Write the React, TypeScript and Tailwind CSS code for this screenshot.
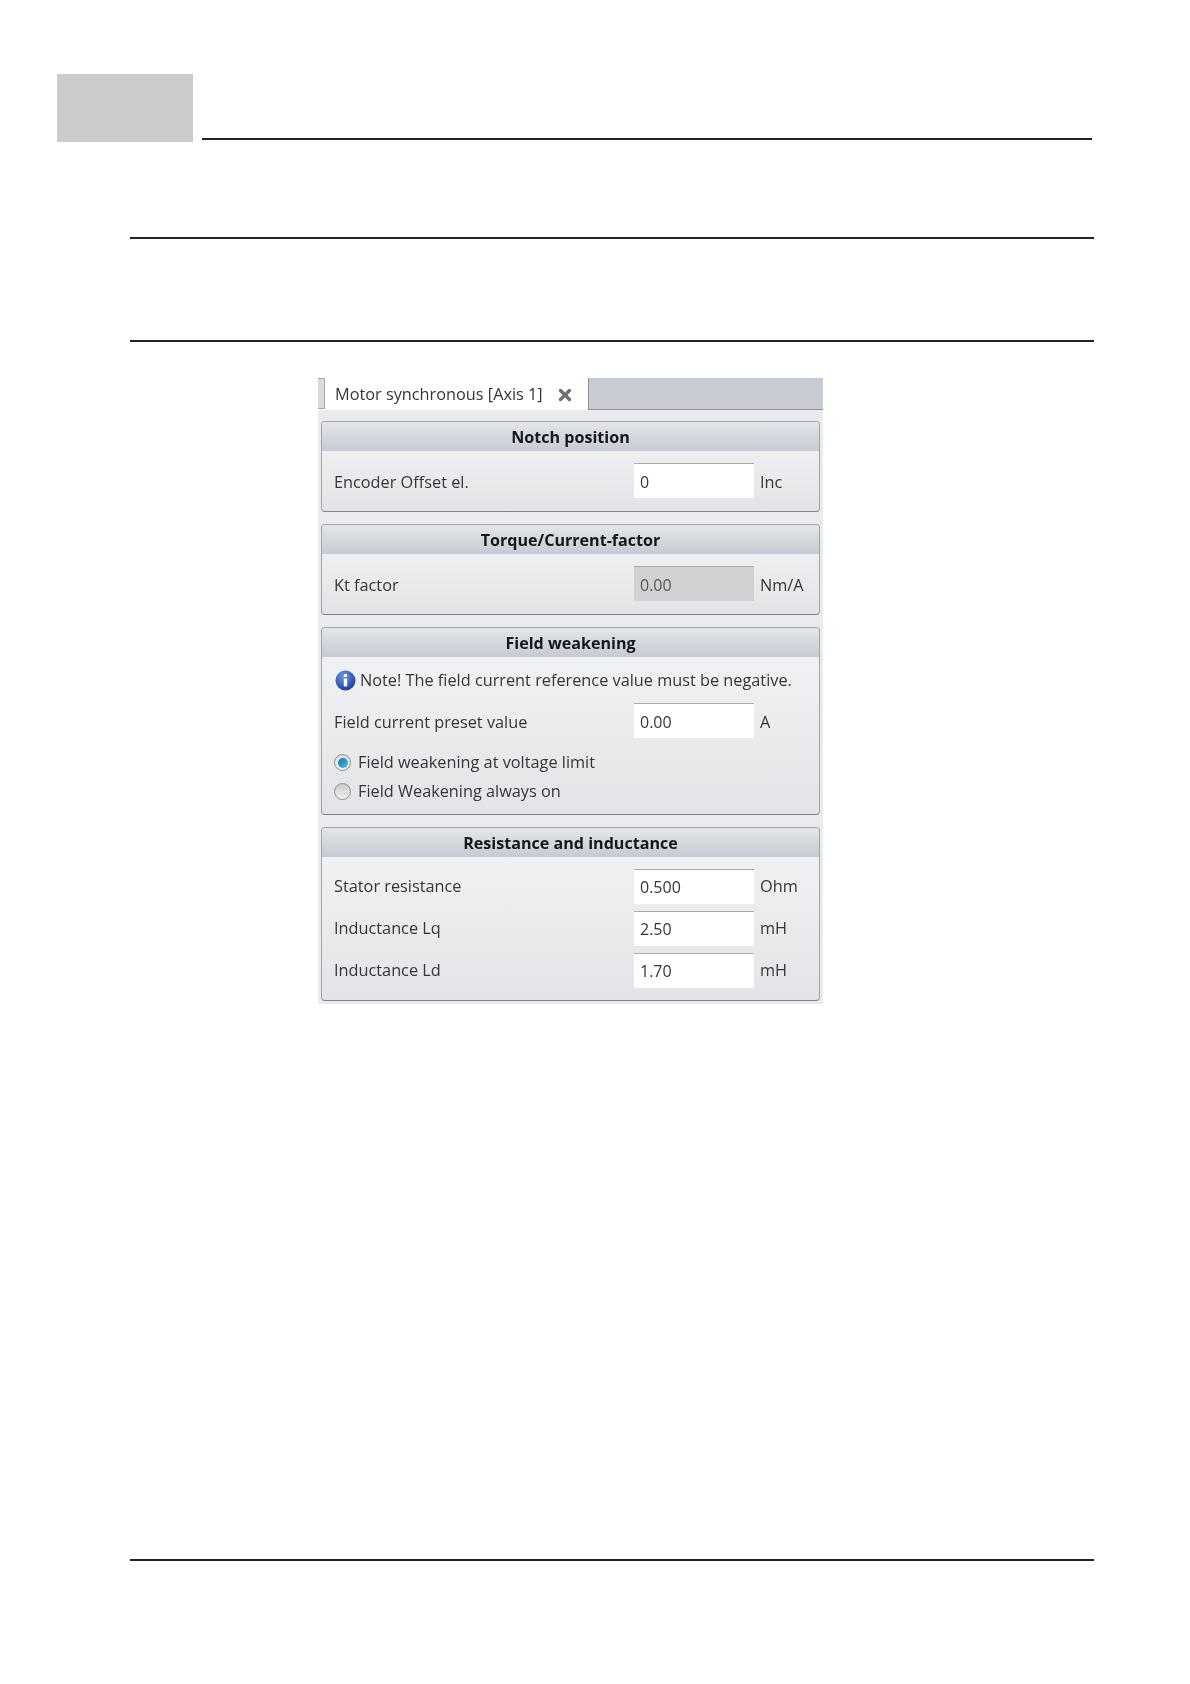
import React from 'react';
import { X } from 'lucide-react';

const font = "font-['Open_Sans','Noto_Sans',sans-serif]";

const GroupBox: React.FC<{ title: string; children: React.ReactNode; className: string }> = ({ title, children, className }) => (
  <div className={`rounded-[4px] border border-[#a0a3a7] border-b-[#7f8286] bg-gradient-to-b from-[#f3f4f5] to-[#e2e4e7] overflow-hidden ${className}`}>
    <div className="h-[29px] pt-[2px] flex items-center justify-center bg-gradient-to-b from-[#e3e6ea] to-[#c6cad3] text-[16.1px] font-bold text-[#15171c]">
      {title}
    </div>
    {children}
  </div>
);

const Row: React.FC<{ label: string; value: string; unit: string; disabled?: boolean; low?: boolean }> = ({ label, value, unit, disabled, low }) => (
  <div className={`flex items-center h-[35px] pl-[12px] text-[16.3px] text-[#33363a] ${low ? 'leading-[30px]' : ''}`}>
    <span className={`w-[300px] ${low ? 'pt-[3px]' : ''}`}>{label}</span>
    <div className={`w-[120px] h-[35px] flex items-center pl-[6px] border-t border-[#a9abad] text-[16px] ${disabled ? 'bg-[#d1d1d1] text-[#555]' : 'bg-white'}`}>
      <span className={low ? 'pt-[2px]' : '-mt-[1px]'}>{value}</span>
    </div>
    <span className={`ml-[6px] ${low ? 'pt-[3px]' : ''}`}>{unit}</span>
  </div>
);

const Radio: React.FC<{ label: string; checked?: boolean }> = ({ label, checked }) => (
  <div className="flex items-center h-[29px] pl-[12px] text-[16.3px] text-[#33363a]">
    <span className={`w-[17px] h-[17px] rounded-full border border-[#8a8d90] bg-gradient-to-b flex items-center justify-center mr-[7px] ${checked ? 'from-[#dcdcdc] to-[#f4f4f4]' : 'from-[#c9c9c9] to-[#f2f2f2]'}`}>
      {checked && <span className="w-[10px] h-[10px] rounded-full bg-gradient-to-br from-[#1c6fa8] to-[#4fc0ea]" />}
    </span>
    {label}
  </div>
);

export default function App() {
  return (
    <div className={`w-[1190px] h-[1684px] bg-white overflow-hidden pt-[74px] ${font}`}>
      {/* Page header */}
      <div className="flex items-end pl-[57px] pr-[98px]">
        <div className="w-[136px] h-[68px] bg-[#cccccc]" />
        <div className="flex-1 ml-[9px] mb-[2px] h-[2px] bg-[#222]" />
      </div>

      {/* Section rules */}
      <div className="ml-[130px] mr-[96px] mt-[95px] h-[2px] bg-[#222]" />
      <div className="ml-[130px] mr-[96px] mt-[101px] h-[2px] bg-[#222]" />

      {/* Dialog */}
      <div className="ml-[318px] mt-[36px] w-[505px] h-[626px] bg-[#e9ebee] blur-[0.4px]">
        <div className="flex h-[32px] bg-white">
          <div className="w-[7px] h-[31px] bg-[#d9dadc] border border-[#a5a7aa] border-l-0" />
          <div className="w-[263px] flex items-center pl-[10px] pt-[1px] text-[16.3px] text-[#33363a]">
            Motor synchronous [Axis 1]
            <X size={18} strokeWidth={4.5} className="ml-[13px] text-[#6d7074]" />
          </div>
          <div className="flex-1 bg-[#c8cbd3] border-l border-b border-[#8f9296]" />
        </div>
        <div className="px-[3px] pt-[11px]">
          <GroupBox title="Notch position" className="h-[91px]">
            <div className="pt-[12px]"><Row label="Encoder Offset el." value="0" unit="Inc" low /></div>
          </GroupBox>
          <GroupBox title="Torque/Current-factor" className="h-[91px] mt-[12px]">
            <div className="pt-[12px]"><Row label="Kt factor" value="0.00" unit="Nm/A" disabled low /></div>
          </GroupBox>
          <GroupBox title="Field weakening" className="h-[188px] mt-[12px]">
            <div className="flex items-center h-[24px] mt-[11px] pl-[13px] text-[16.3px] whitespace-nowrap text-[#33363a]">
              <svg width="21" height="21" viewBox="0 0 21 21" className="mr-[4px]">
                <defs>
                  <radialGradient id="info" cx="40%" cy="30%" r="75%">
                    <stop offset="0%" stopColor="#6f98e2" />
                    <stop offset="100%" stopColor="#17379c" />
                  </radialGradient>
                </defs>
                <circle cx="10.5" cy="10.5" r="10" fill="url(#info)" />
                <circle cx="10.5" cy="5.5" r="1.8" fill="#fff" />
                <rect x="8.8" y="8.5" width="3.4" height="8" rx="1" fill="#fff" />
              </svg>
              Note! The field current reference value must be negative.
            </div>
            <div className="mt-[11px]"><Row label="Field current preset value" value="0.00" unit="A" low /></div>
            <div className="mt-[10px]">
              <Radio label="Field weakening at voltage limit" checked />
              <Radio label="Field Weakening always on" />
            </div>
          </GroupBox>
          <GroupBox title="Resistance and inductance" className="h-[174px] mt-[12px]">
            <div className="pt-[12px] flex flex-col gap-[7px]">
              <Row label="Stator resistance" value="0.500" unit="Ohm" />
              <Row label="Inductance Lq" value="2.50" unit="mH" />
              <Row label="Inductance Ld" value="1.70" unit="mH" />
            </div>
          </GroupBox>
        </div>
      </div>

      {/* Footer rule */}
      <div className="ml-[130px] mr-[96px] mt-[555px] h-[2px] bg-[#222]" />
    </div>
  );
}
